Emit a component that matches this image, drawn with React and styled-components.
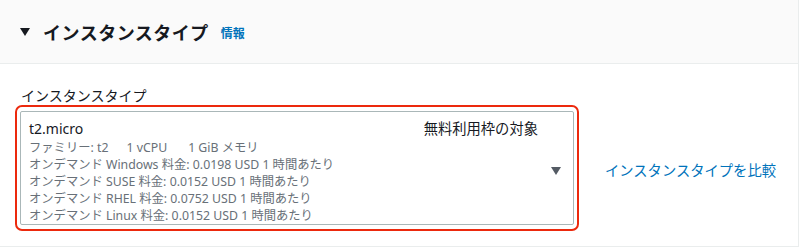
import React from 'react'
import styled, { createGlobalStyle } from 'styled-components'

const Global = createGlobalStyle`
  html, body { margin: 0; padding: 0; background: #fff; }
  body { font-family: "Noto Sans", "Noto Sans CJK JP", sans-serif; color: #16191f; }
`

const Panel = styled.div`
  width: 798px;
  height: 246px;
  border-right: 1px solid #eaeded;
  border-bottom: 1px solid #eaeded;
  display: flex;
  flex-direction: column;
`
const Header = styled.div`
  height: 64px;
  box-sizing: border-box;
  background: #fafafa;
  border-bottom: 1px solid #eaeded;
  display: flex;
  align-items: center;
  padding-left: 20px;
`
const Caret = styled.span`
  width: 0;
  height: 0;
  border-left: 5px solid transparent;
  border-right: 5px solid transparent;
  border-top: 8px solid ${p => p.color || '#16191f'};
  display: inline-block;
`
const Title = styled.h2`
  margin: 0 0 0 13px;
  font-size: 18px;
  font-weight: 700;
  font-family: "Liberation Sans", "Noto Sans CJK JP", sans-serif;
  letter-spacing: 0.5px;
`
const Info = styled.a`
  margin-left: 12px;
  margin-top: 3px;
  font-size: 12px;
  font-weight: 700;
  color: #0073bb;
`
const Body = styled.div`
  padding: 24px 20px 0 15px;
`
const Label = styled.div`
  font-size: 14px;
  line-height: 16px;
  padding-left: 6px;
  margin-bottom: 1px;
`
const Row = styled.div`
  display: flex;
  align-items: center;
`
const Focus = styled.div`
  width: 564px;
  height: 126px;
  box-sizing: border-box;
  border: 2px solid #ec290d;
  border-radius: 7px;
  padding: 4px 3px;
`
const Select = styled.div`
  height: 100%;
  box-sizing: border-box;
  border: 1px solid #aab7b8;
  border-radius: 2px;
  display: flex;
  align-items: center;
  padding: 6px 12px 0 8px;
`
const Option = styled.div`
  flex: 1;
`
const OptionTop = styled.div`
  display: flex;
  justify-content: space-between;
  font-size: 14px;
  line-height: 20px;
  padding-right: 13px;
`
const Badge = styled.span`
  font-size: 14.3px;
`
const Detail = styled.div`
  font-size: 12.3px;
  color: #687078;
  line-height: 17px;
  white-space: nowrap;
`
const Spec = styled.span`
  margin-right: ${p => p.gap}px;
`
const Compare = styled.a`
  margin-left: 26px;
  font-size: 14.3px;
  color: #0073bb;
  margin-top: 2px;
`

const prices = [
  ['Windows', '0.0198'],
  ['SUSE', '0.0152'],
  ['RHEL', '0.0752'],
  ['Linux', '0.0152'],
]

export default function App() {
  return (
    <>
      <Global />
      <Panel>
        <Header>
          <Caret />
          <Title>インスタンスタイプ</Title>
          <Info>情報</Info>
        </Header>
        <Body>
          <Label>インスタンスタイプ</Label>
          <Row>
            <Focus>
              <Select>
                <Option>
                  <OptionTop>
                    <span>t2.micro</span>
                    <Badge>無料利用枠の対象</Badge>
                  </OptionTop>
                  <Detail>
                    <Spec gap={18}>ファミリー: t2</Spec>
                    <Spec gap={21}>1 vCPU</Spec>
                    <span>1 GiB メモリ</span>
                  </Detail>
                  {prices.map(([os, p]) => (
                    <Detail key={os}>オンデマンド {os} 料金: {p} USD 1 時間あたり</Detail>
                  ))}
                </Option>
                <Caret color="#545b64" />
              </Select>
            </Focus>
            <Compare>インスタンスタイプを比較</Compare>
          </Row>
        </Body>
      </Panel>
    </>
  )
}
